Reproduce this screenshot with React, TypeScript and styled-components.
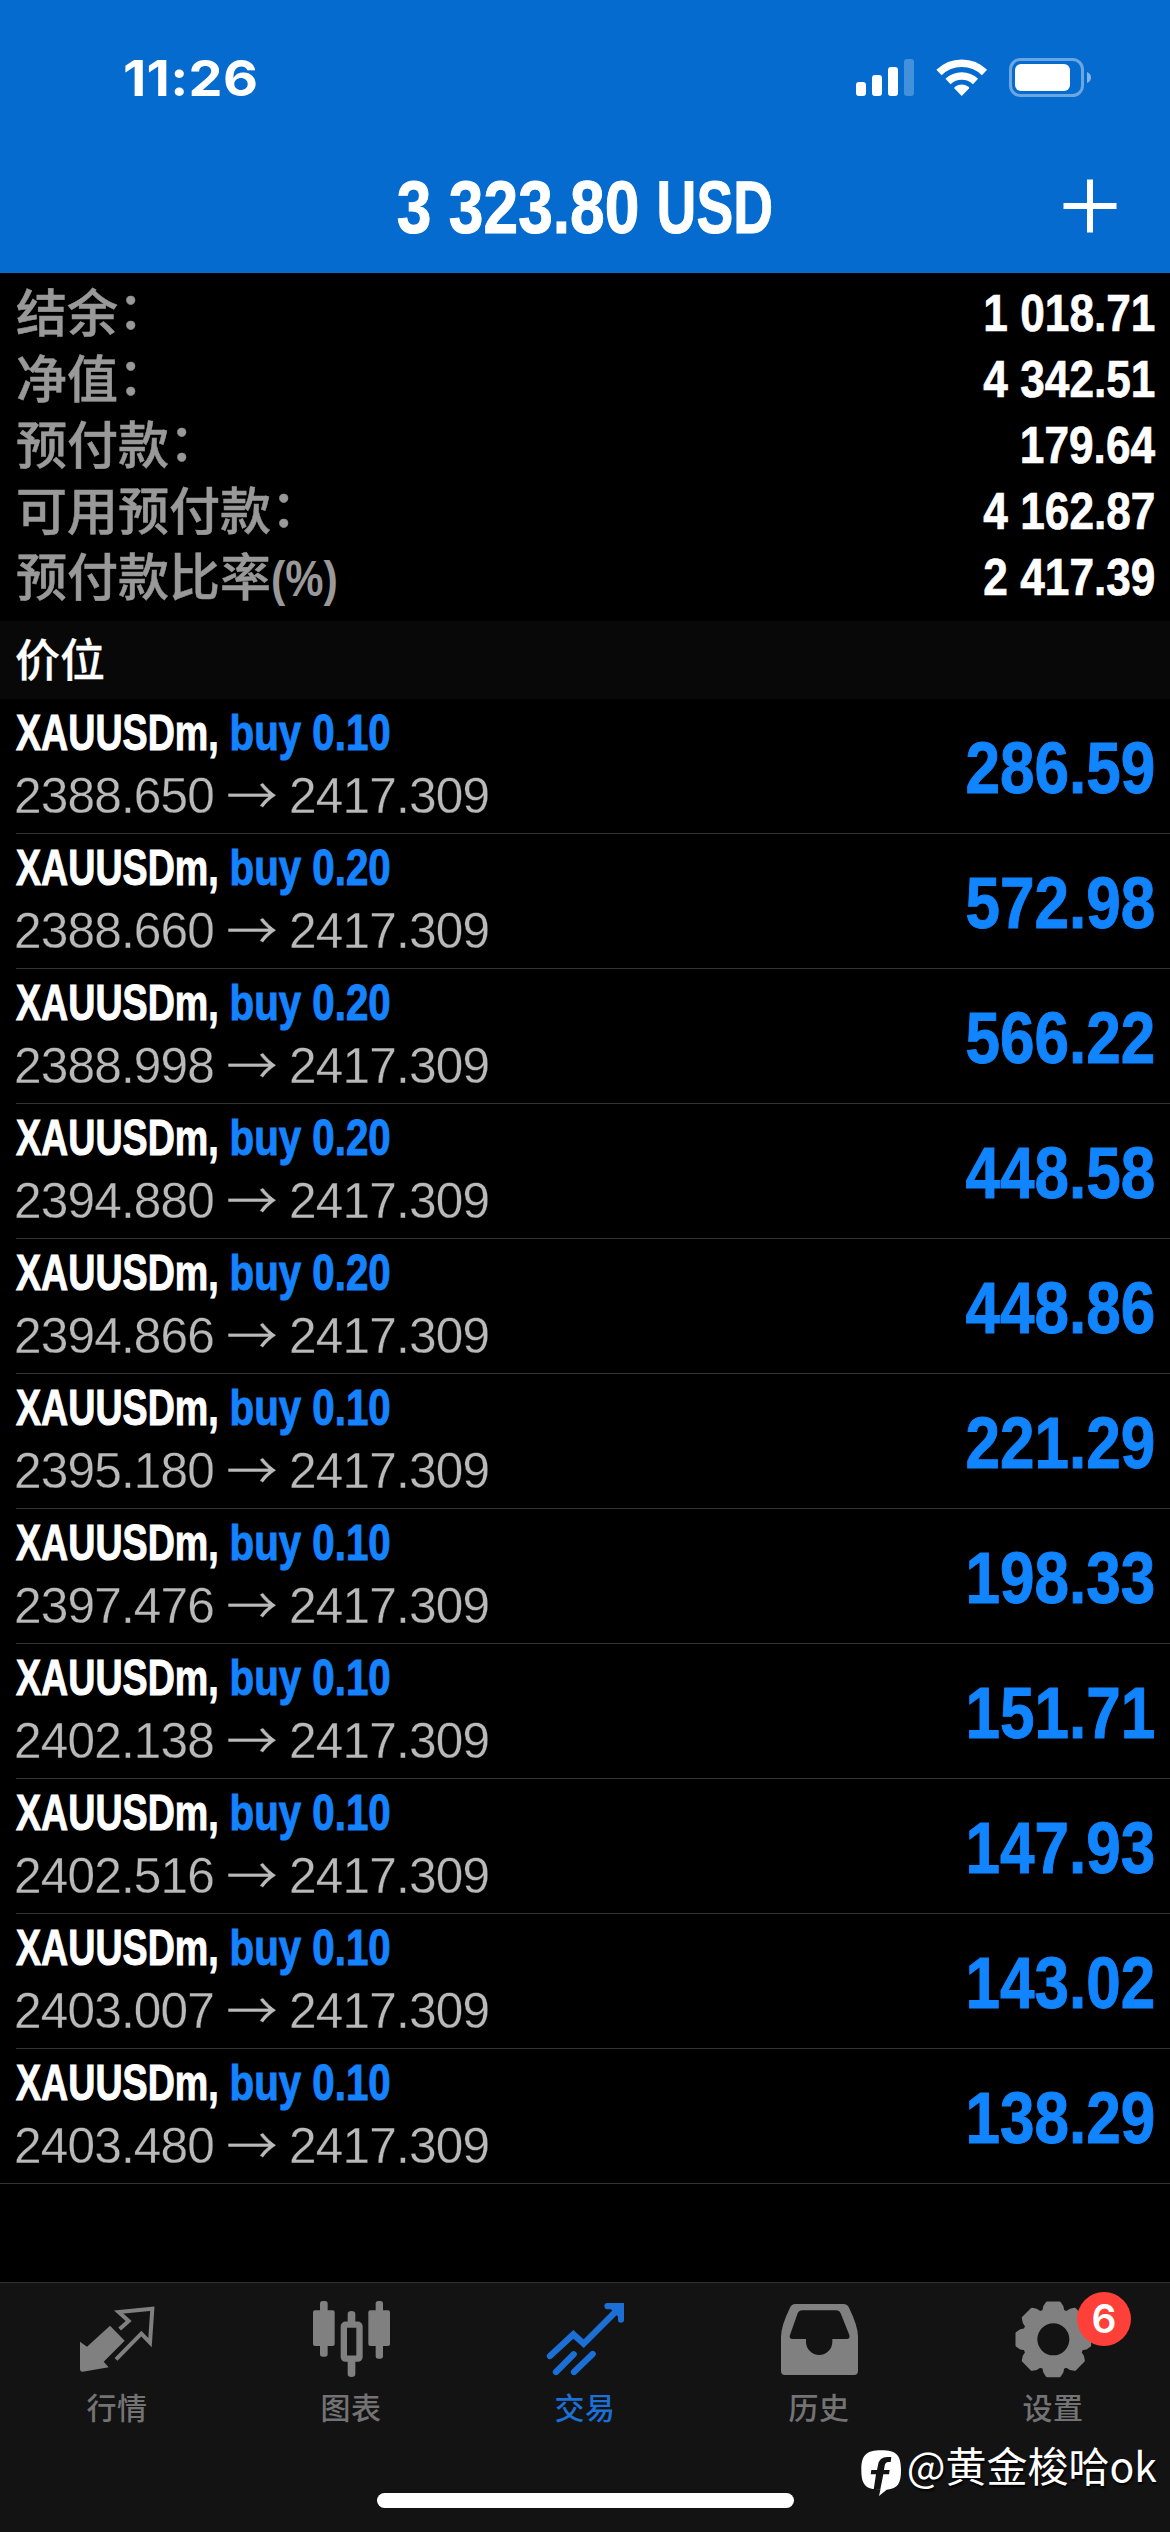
import React from "react";
import styled, { createGlobalStyle } from "styled-components";

const LATIN = `"Liberation Sans", Arial, "Noto Sans CJK SC", sans-serif`;
const CJK = `"Noto Sans CJK SC", "Liberation Sans", sans-serif`;
const SYSTEM = `Inter, "Liberation Sans", sans-serif`;

const GlobalStyle = createGlobalStyle`
  * { box-sizing: border-box; }
  body { margin: 0; background: #000; font-kerning: none; }
`;

const Screen = styled.div`
  width: 1170px;
  height: 2532px;
  display: flex;
  flex-direction: column;
  position: relative;
  overflow: hidden;
  background: #000;
  color: #fff;
  font-family: ${LATIN};
`;

const Header = styled.header`
  height: 273px;
  flex: none;
  background: #056bcf;
`;

const StatusBar = styled.div`
  height: 142px;
  padding: 14px 78px 0 123px;
  display: flex;
  align-items: center;
  justify-content: space-between;
`;

const Clock = styled.div`
  font: 700 50px/60px ${SYSTEM};
  letter-spacing: 0.3px;
  transform: scaleX(1.08);
  transform-origin: left;
`;

const StatusIcons = styled.svg`
  display: block;
  width: 237px;
  height: 40px;
`;

const NavBar = styled.div`
  height: 131px;
  display: grid;
  grid-template-columns: 160px 1fr 160px;
  align-items: center;
`;

const Title = styled.h1`
  grid-column: 2;
  margin: 0;
  text-align: center;
  font-size: 74px;
  line-height: 84px;
  font-weight: 700;
  white-space: pre;
  -webkit-text-stroke: 1px currentColor;
  transform: scaleX(0.842);
`;

const Currency = styled.span`
  display: inline-block;
  margin-right: -18px;
  transform: scaleX(0.885);
  transform-origin: left;
`;

const AddButton = styled.button`
  border: 0;
  padding: 0;
  background: none;
  width: 54px;
  height: 54px;
  justify-self: end;
  margin: 0 53px 4px 0;
  svg { display: block; }
`;

const Summary = styled.section`
  height: 348px;
  flex: none;
  padding: 7px 15px 11px 16px;
`;

const SummaryRow = styled.div`
  height: 66px;
  display: flex;
  align-items: center;
  justify-content: space-between;
`;

const SummaryLabel = styled.span`
  font: 500 51px/60px ${LATIN};
  color: #999;
  padding-top: 3px;
  -webkit-text-stroke: 0.5px currentColor;
`;

const Colon = styled.span`
  display: inline-block;
  line-height: 56px;
  transform: translateY(-3px);
`;

const Unit = styled.span`
  display: inline-block;
  font: 700 50px/50px ${LATIN};
  -webkit-text-stroke: 0;
  transform: scaleX(0.86);
  transform-origin: left;
`;

const SummaryValue = styled.span`
  font-size: 52px;
  line-height: 60px;
  font-weight: 700;
  -webkit-text-stroke: 0.7px currentColor;
  transform: scaleX(0.85);
  transform-origin: right;
`;

const SectionTitle = styled.h2`
  flex: none;
  height: 78px;
  margin: 0;
  padding: 0 15px 5px;
  display: flex;
  align-items: center;
  background: #080808;
  font: 500 45px/60px ${CJK};
  -webkit-text-stroke: 0.3px currentColor;
`;

const Positions = styled.ul`
  flex: 1;
  margin: 0;
  padding: 0;
  list-style: none;
`;

const Position = styled.li<{ $last: boolean }>`
  height: 135px;
  margin-left: ${(p) => (p.$last ? 0 : 16)}px;
  padding: 2px 15px 0 ${(p) => (p.$last ? 16 : 0)}px;
  border-bottom: 1px solid #333;
  display: flex;
  justify-content: space-between;
  align-items: center;
`;

const Order = styled.div`
  height: 126px;
  align-self: flex-start;
`;

const Symbol = styled.div`
  font-size: 49.5px;
  line-height: 63px;
  font-weight: 700;
  white-space: pre;
  -webkit-text-stroke: 1px currentColor;
  transform: scaleX(0.76);
  transform-origin: left;
`;

const Side = styled.span`
  display: inline-block;
  color: #1583ff;
  transform: scaleX(1.07);
  transform-origin: left;
`;

const Prices = styled.div`
  display: flex;
  align-items: center;
  margin-left: -2px;
  font-size: 49.5px;
  line-height: 63px;
  letter-spacing: -0.8px;
  color: #b9b9b9;
  -webkit-text-stroke: 0.3px #000;
`;

const Arrow = styled.span`
  font: 400 52px/58px ${CJK};
  width: 75px;
  padding-bottom: 5px;
  display: flex;
  justify-content: center;
`;

const Profit = styled.div`
  font-size: 73px;
  line-height: 84px;
  font-weight: 700;
  color: #1184ff;
  padding-top: 1px;
  -webkit-text-stroke: 1px currentColor;
  transform: scaleX(0.85);
  transform-origin: right;
`;

const TabBar = styled.nav`
  flex: none;
  height: 250px;
  border-top: 1px solid #303030;
  background: #131313;
  display: flex;
  flex-direction: column;
  align-items: center;
`;

const Tabs = styled.div`
  width: 100%;
  height: 210px;
  padding-top: 13px;
  display: grid;
  grid-template-columns: repeat(5, 1fr);
`;

const Tab = styled.div<{ $active?: boolean }>`
  position: relative;
  display: flex;
  flex-direction: column;
  align-items: center;
  color: ${(p) => (p.$active ? "#1b6fd5" : "#808080")};
`;

const TabIcon = styled.svg`
  width: 84px;
  height: 84px;
  fill: currentColor;
`;

const TabLabel = styled.span<{ $active?: boolean }>`
  margin-top: 8px;
  font: 500 30px/36px ${CJK};
  letter-spacing: 0.5px;
  color: ${(p) => (p.$active ? "#1b6fd5" : "#737373")};
`;

const Badge = styled.span`
  position: absolute;
  left: 141px;
  top: -4px;
  width: 54px;
  height: 54px;
  border-radius: 50%;
  background: #fe4038;
  color: #fff;
  font: 600 39px/54px ${SYSTEM};
  text-align: center;
`;

const HomeIndicator = styled.div`
  width: 417px;
  height: 15px;
  border-radius: 8px;
  background: #fff;
`;

const Watermark = styled.div`
  position: absolute;
  right: 13px;
  top: 2431px;
  display: flex;
  align-items: center;
  gap: 6px;
  font: 400 41px/56px ${CJK};
  text-shadow: 1px 2px 2px #000;
  svg { margin-top: 19px; }
`;

const summary = [
  { label: "结余", tail: "：", value: "1 018.71" },
  { label: "净值", tail: "：", value: "4 342.51" },
  { label: "预付款", tail: "：", value: "179.64" },
  { label: "可用预付款", tail: "：", value: "4 162.87" },
  { label: "预付款比率", unit: "(%)", value: "2 417.39" },
];

const positions = [
  { volume: "0.10", open: "2388.650", profit: "286.59" },
  { volume: "0.20", open: "2388.660", profit: "572.98" },
  { volume: "0.20", open: "2388.998", profit: "566.22" },
  { volume: "0.20", open: "2394.880", profit: "448.58" },
  { volume: "0.20", open: "2394.866", profit: "448.86" },
  { volume: "0.10", open: "2395.180", profit: "221.29" },
  { volume: "0.10", open: "2397.476", profit: "198.33" },
  { volume: "0.10", open: "2402.138", profit: "151.71" },
  { volume: "0.10", open: "2402.516", profit: "147.93" },
  { volume: "0.10", open: "2403.007", profit: "143.02" },
  { volume: "0.10", open: "2403.480", profit: "138.29" },
];

// Eight-tooth outline, centred on (127, 130).
const gearPath = (() => {
  const pts: string[] = [];
  const profile: [number, number][] = [
    [-18.5, 89],
    [-14.5, 101],
    [-9.5, 110],
    [9.5, 110],
    [14.5, 101],
    [18.5, 89],
  ];
  for (let i = 0; i < 8; i++) {
    for (const [offset, r] of profile) {
      const a = ((i * 45 + offset - 90) * Math.PI) / 180;
      pts.push(`${(127 + r * Math.cos(a)).toFixed(1)} ${(130 + r * Math.sin(a)).toFixed(1)}`);
    }
  }
  return `M${pts.join("L")}Z`;
})();

const QuotesIcon = () => (
  <TabIcon viewBox="225 498 252 252">
    <path d="M240 635L261 650L330 587L374 632L311 695L326 712L248 725Q240 726 240 718Z" />
    <path
      d="M359 597L386 573L356 546L457 536L450 638L424 611L348 688"
      fill="none"
      stroke="currentColor"
      strokeWidth="12"
    />
  </TabIcon>
);

const ChartIcon = () => (
  <TabIcon viewBox="927 498 252 252">
    <rect x="939" y="541" width="65" height="107" rx="6" />
    <rect x="960" y="513" width="23" height="167" rx="8" />
    <rect x="1105" y="541" width="65" height="107" rx="6" />
    <rect x="1127" y="513" width="22" height="173" rx="8" />
    <rect x="1031.500" y="584" width="47" height="102" rx="5" fill="none" stroke="currentColor" strokeWidth="19" />
    <path d="M1043 580V551Q1043 543 1054.500 543T1066 551V580ZM1043 690V733Q1043 741 1054.500 741T1066 733V690Z" />
  </TabIcon>
);

const TradeIcon = () => (
  <TabIcon viewBox="279 78 252 252">
    <g fill="none" stroke="currentColor" strokeWidth="19" strokeLinecap="round">
      <path d="M300 258L370 193L401 221L508 114" />
      <path d="M318 306L371 253M372 306L428 252" />
    </g>
    <path d="M472 99H522V150Q522 158 513 158T504 150V140L483 118H472Q463 117 463 108T472 99Z" />
  </TabIcon>
);

const HistoryIcon = () => (
  <TabIcon viewBox="981 78 252 252">
    <path
      fillRule="evenodd"
      d="M1036 102H1180Q1191 102 1196 111Q1224 168 1224 200V303Q1224 315 1212 315H1005Q993 315 993 303V200Q993 168 1021 111Q1026 102 1036 102ZM1057 121H1158Q1168 121 1172 130L1198 195Q1201 207 1190 207H1147V215A39.500 40 0 0 1 1068 215V207H1028Q1016 207 1020 195L1043 130Q1047 121 1057 121Z"
    />
  </TabIcon>
);

const SettingsIcon = () => (
  <TabIcon viewBox="0 0 252 252">
    <path d={gearPath} stroke="currentColor" strokeWidth="10" strokeLinejoin="round" />
    <circle cx="127" cy="130" r="48" fill="#131313" />
  </TabIcon>
);

const tabs = [
  { label: "行情", Icon: QuotesIcon },
  { label: "图表", Icon: ChartIcon },
  { label: "交易", Icon: TradeIcon, active: true },
  { label: "历史", Icon: HistoryIcon },
  { label: "设置", Icon: SettingsIcon, badge: "6" },
];

export default function App() {
  return (
    <>
      <GlobalStyle />
      <Screen>
        <Header>
          <StatusBar>
            <Clock>11:26</Clock>
            <StatusIcons viewBox="855 58 237 40" fill="#fff">
              <rect x="856" y="82" width="10" height="14" rx="3" />
              <rect x="872" y="75" width="10" height="21" rx="3" />
              <rect x="888" y="67" width="10" height="29" rx="3" />
              <rect x="904" y="59" width="10" height="37" rx="3" opacity="0.25" />
              <g fill="none" stroke="#fff">
                <path d="M939 72.500A32.500 32.500 0 0 1 984.500 72.500" strokeWidth="7.500" />
                <path d="M948 81.500A20 20 0 0 1 975.500 81.500" strokeWidth="7.500" />
              </g>
              <path d="M961.700 96L954.500 88.500Q954 87.500 955 86.700Q961.700 82.500 968.500 86.700Q969.500 87.500 969 88.500Z" />
              <rect x="1010.500" y="59.500" width="72" height="36" rx="10" fill="none" stroke="#fff" strokeWidth="3" opacity="0.4" />
              <rect x="1015" y="64" width="55" height="27" rx="6" />
              <path d="M1087 72Q1091 73.500 1091 77.500T1087 83Z" opacity="0.5" />
            </StatusIcons>
          </StatusBar>
          <NavBar>
            <Title>
              3 323.80 <Currency>USD</Currency>
            </Title>
            <AddButton aria-label="add">
              <svg width="54" height="54" viewBox="0 0 54 54">
                <path d="M0.500 27H53.500M27 0.500V53.500" stroke="#fff" strokeWidth="6" />
              </svg>
            </AddButton>
          </NavBar>
        </Header>

        <Summary>
          {summary.map((s) => (
            <SummaryRow key={s.label}>
              <SummaryLabel>
                {s.label}
                {s.tail && <Colon>{s.tail}</Colon>}
                {s.unit && <Unit>{s.unit}</Unit>}
              </SummaryLabel>
              <SummaryValue>{s.value}</SummaryValue>
            </SummaryRow>
          ))}
        </Summary>

        <SectionTitle>价位</SectionTitle>

        <Positions>
          {positions.map((p, i) => (
            <Position key={p.open} $last={i === positions.length - 1}>
              <Order>
                <Symbol>
                  XAUUSDm, <Side>buy {p.volume}</Side>
                </Symbol>
                <Prices>
                  <span>{p.open}</span>
                  <Arrow>→</Arrow>
                  <span>2417.309</span>
                </Prices>
              </Order>
              <Profit>{p.profit}</Profit>
            </Position>
          ))}
        </Positions>

        <TabBar>
          <Tabs>
            {tabs.map(({ label, Icon, active, badge }) => (
              <Tab key={label} $active={active}>
                <Icon />
                <TabLabel $active={active}>{label}</TabLabel>
                {badge && <Badge>{badge}</Badge>}
              </Tab>
            ))}
          </Tabs>
          <HomeIndicator />
        </TabBar>

        <Watermark>
          <svg width="40" height="46" viewBox="64 530 120 138">
            <path
              fill="#fff"
              d="M125 531C170 531 184 545 184 590C184 630 175 646 141 649L118 668L122 649C76 649 65 632 65 590C65 545 80 531 125 531Z"
            />
            <path
              fill="#131313"
              d="M155 551L153 566H146Q137 566 135 577L133 590H150L148 603H131L118 668L121 649H102L109 603H93L95 590H112L115 575Q119 551 143 551Z"
            />
          </svg>
          <span>@黄金梭哈ok</span>
        </Watermark>
      </Screen>
    </>
  );
}
